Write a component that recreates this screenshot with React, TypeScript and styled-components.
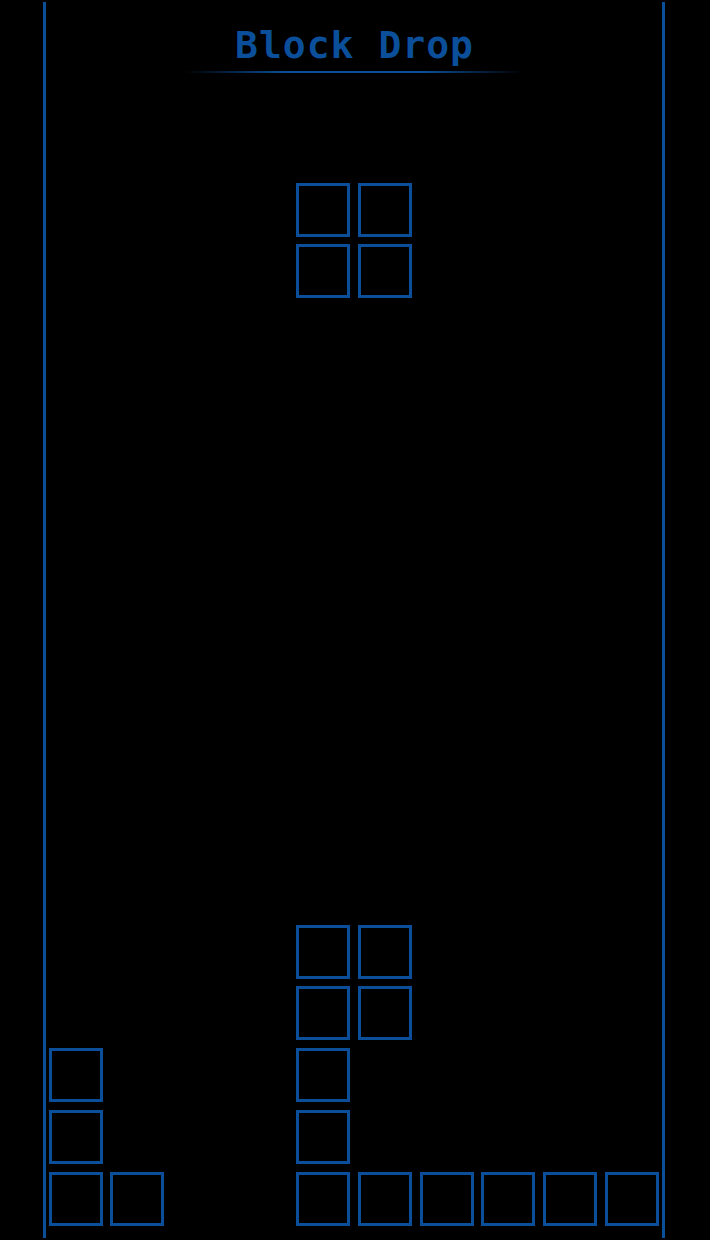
import React from "react";
import styled, { createGlobalStyle } from "styled-components";

const BLUE = "#0b4f9b";

const GlobalStyle = createGlobalStyle`
  html, body {
    margin: 0;
    padding: 0;
    background: #000;
  }
  * { box-sizing: border-box; }
`;

const Page = styled.div`
  width: 710px;
  height: 1240px;
  background: #000;
  padding: 2px 0 2px 43px;
  overflow: hidden;
  display: flex;
`;

const Board = styled.div`
  width: 622px;
  height: 100%;
  border-left: 3px solid ${BLUE};
  border-right: 3px solid ${BLUE};
  display: flex;
  flex-direction: column;
`;

const Header = styled.header`
  padding-top: 23.5px;
  display: flex;
  flex-direction: column;
  align-items: center;
`;

const Title = styled.h1`
  margin: 0;
  font-family: "DejaVu Sans Mono", monospace;
  font-weight: bold;
  font-size: 38px;
  line-height: 1;
  letter-spacing: 1px;
  color: ${BLUE};
  padding-left: 1px;
`;

const Underline = styled.div`
  margin-top: 7.5px;
  width: 340px;
  height: 2px;
  background: linear-gradient(90deg, transparent, ${BLUE} 30%, ${BLUE} 70%, transparent);
`;

const Well = styled.div`
  flex: 1;
  display: grid;
  grid-template-columns: repeat(10, 54px);
  grid-auto-rows: 54px;
  column-gap: 7.85px;
  row-gap: 7.85px;
  align-content: end;
  padding: 0 0 12px 2.5px;
`;

const Cell = styled.div<{ $col: number; $row: number }>`
  grid-column: ${(p) => p.$col + 1};
  grid-row: ${(p) => p.$row + 1};
  border: 3px solid ${BLUE};
  background: transparent;
`;

const blocks: [number, number][] = [
  [4, 0], [5, 0],
  [4, 1], [5, 1],
  [4, 12], [5, 12],
  [4, 13], [5, 13],
  [0, 14], [4, 14],
  [0, 15], [4, 15],
  [0, 16], [1, 16], [4, 16], [5, 16], [6, 16], [7, 16], [8, 16], [9, 16],
];

export default function App() {
  return (
    <>
      <GlobalStyle />
      <Page>
        <Board>
          <Header>
            <Title>Block Drop</Title>
            <Underline />
          </Header>
          <Well>
            {blocks.map(([c, r]) => (
              <Cell key={`${c}-${r}`} $col={c} $row={r} />
            ))}
          </Well>
        </Board>
      </Page>
    </>
  );
}
